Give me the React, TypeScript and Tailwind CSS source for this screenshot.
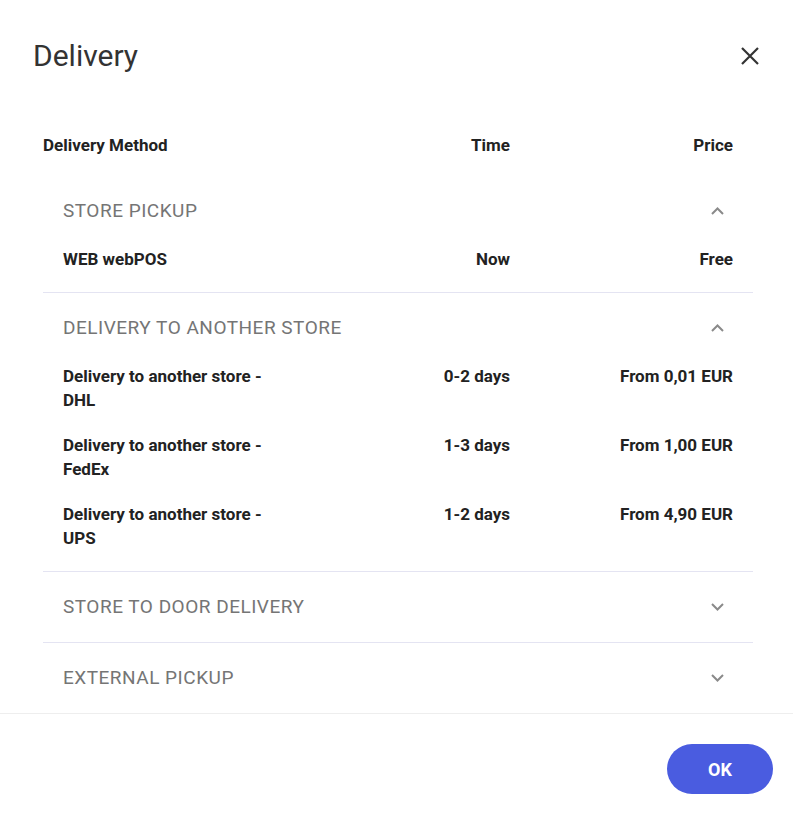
import { useState } from 'react';

type Method = { name: string; time: string; price: string };
type Group = { id: string; title: string; methods: Method[] };

const GROUPS: Group[] = [
  {
    id: 'pickup',
    title: 'Store Pickup',
    methods: [{ name: 'WEB webPOS', time: 'Now', price: 'Free' }],
  },
  {
    id: 'another',
    title: 'Delivery to another store',
    methods: [
      { name: 'Delivery to another store - DHL', time: '0-2 days', price: 'From 0,01 EUR' },
      { name: 'Delivery to another store - FedEx', time: '1-3 days', price: 'From 1,00 EUR' },
      { name: 'Delivery to another store - UPS', time: '1-2 days', price: 'From 4,90 EUR' },
    ],
  },
  { id: 'door', title: 'Store to door delivery', methods: [] },
  { id: 'external', title: 'External pickup', methods: [] },
];

function Chevron({ up }: { up: boolean }) {
  return (
    <svg width="13" height="8" viewBox="0 0 13 8" fill="none" className="text-[#8a8a8a]">
      <path
        d={up ? 'M1 7 L6.5 1.5 L12 7' : 'M1 1 L6.5 6.5 L12 1'}
        stroke="currentColor"
        strokeWidth="2"
      />
    </svg>
  );
}

export default function App() {
  const [open, setOpen] = useState<Record<string, boolean>>({ pickup: true, another: true });

  const toggle = (id: string) => setOpen(prev => ({ ...prev, [id]: !prev[id] }));

  return (
    <div className="w-[793px] h-[815px] bg-white font-['Roboto',sans-serif] text-[#222] flex flex-col">
      {/* Title bar */}
      <div className="flex items-center justify-between pl-[33px] pr-[31px] pt-[36px] h-[76px]">
        <h1 className="text-[30px] leading-[40px] font-normal text-[#333]">Delivery</h1>
        <button className="w-6 h-6 flex items-center justify-center">
          <svg width="20" height="20" viewBox="0 0 20 20" fill="none">
            <path d="M2 2 L18 18 M18 2 L2 18" stroke="#333" strokeWidth="2.2" />
          </svg>
        </button>
      </div>

      <div className="flex-1 pl-[43px] pr-[40px]">
        {/* Column heads */}
        <div className="grid grid-cols-[243px_224px_223px] pt-[57px] pb-[19px] text-[17px] leading-6 font-bold">
          <div>Delivery Method</div>
          <div className="text-right">Time</div>
          <div className="text-right">Price</div>
        </div>

        {GROUPS.map((g, i) => {
          const isOpen = !!open[g.id];
          return (
            <div key={g.id} className={i < GROUPS.length - 1 ? 'border-b border-[#e4e4f2]' : ''}>
              <button
                onClick={() => toggle(g.id)}
                className="w-full h-[70px] flex items-center justify-between pl-5 pr-[29px] text-left"
              >
                <span className="uppercase text-[19px] tracking-[0.5px] text-[#757575] font-normal">
                  {g.title}
                </span>
                <Chevron up={isOpen} />
              </button>
              {isOpen && g.methods.length > 0 && (
                <div className="px-5 pt-[1px]">
                  {g.methods.map(m => (
                    <div
                      key={m.name}
                      className="grid grid-cols-[223px_224px_223px] pb-[21px] text-[17px] leading-6 font-bold"
                    >
                      <div className="pr-2">{m.name}</div>
                      <div className="text-right">{m.time}</div>
                      <div className="text-right">{m.price}</div>
                    </div>
                  ))}
                </div>
              )}
            </div>
          );
        })}
      </div>

      {/* Footer */}
      <div className="border-t border-[#eeeeee] h-[102px] flex justify-end items-start pt-[30px] pr-5">
        <button className="w-[106px] h-[50px] rounded-full bg-[#4a5ce0] text-white text-[18px] font-bold">
          OK
        </button>
      </div>
    </div>
  );
}
